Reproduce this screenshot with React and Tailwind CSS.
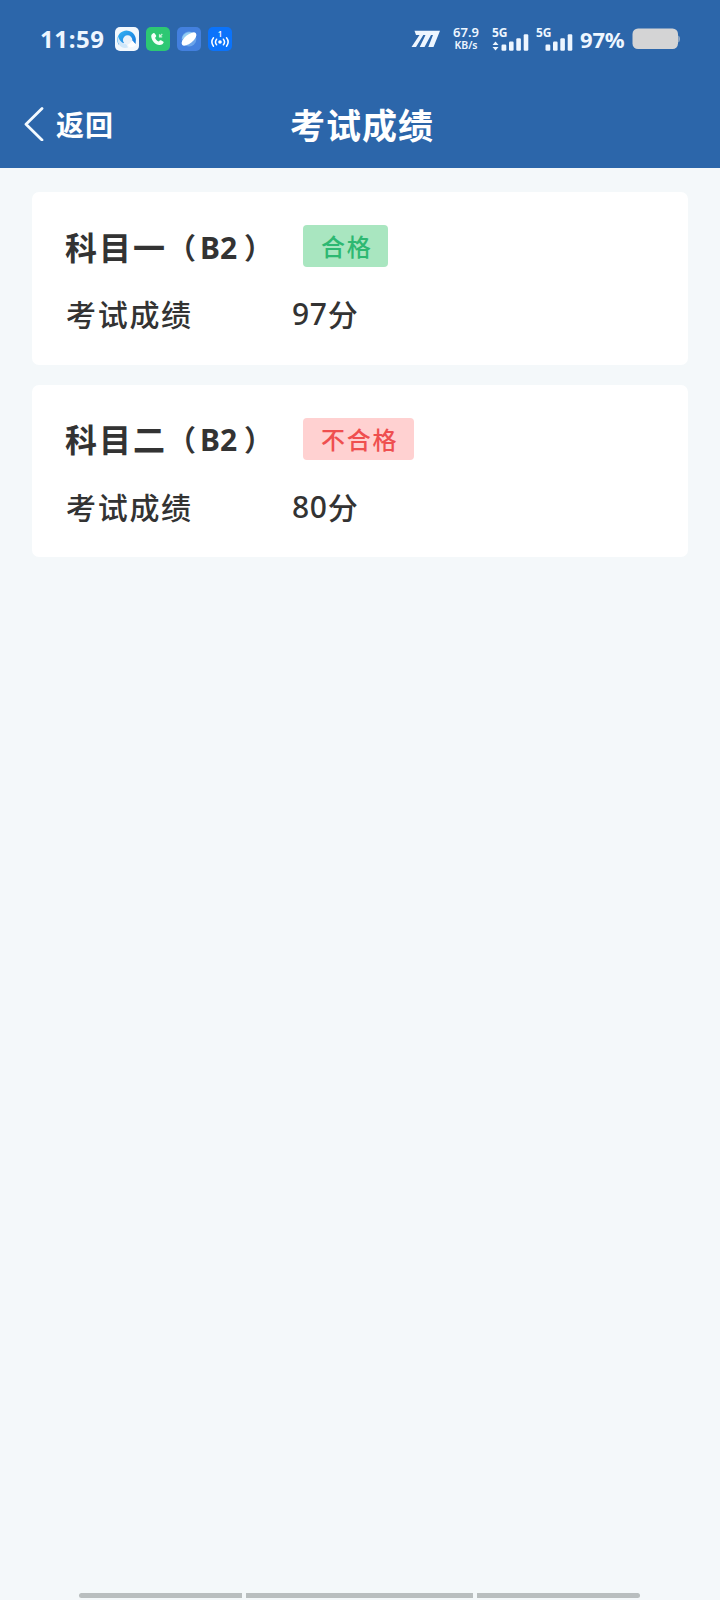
const FONT = "font-['Noto_Sans','Noto_Sans_CJK_SC',sans-serif]";

function AppIcons() {
  return (
    <div className="ml-[9px] flex gap-[7px]">
      <svg width="24" height="24" viewBox="0 0 24 24">
        <defs>
          <linearGradient id="ring" x1="0" y1="0" x2="1" y2="1">
            <stop offset="0" stopColor="#35b5f4" />
            <stop offset="1" stopColor="#1577dc" />
          </linearGradient>
        </defs>
        <rect width="24" height="24" rx="5" fill="#f3f8fd" />
        <path d="M3.500 17.500A9.300 9.300 0 1 1 20.800 14l-.2 3-3.800-2.600L8 16.200Z" fill="url(#ring)" />
        <path d="M3 9c1.500 5 4 7 8.500 8.200l1.500 3.300c-4 1.200-7.500-.2-9.200-3.200C2.400 14.800 2.300 12 3 9Z" fill="#cfe7fa" />
        <circle cx="12.600" cy="13" r="4.700" fill="#eaf2fa" />
        <path d="M13 17.500c2.500-1.500 3.500-3 4.500-4l3.500 4.200c-1.500 2-4.500 3-7 2.300Z" fill="#fff" />
      </svg>
      <svg width="24" height="24" viewBox="0 0 24 24">
        <rect width="24" height="24" rx="5" fill="#2dc873" />
        <path d="M7.200 6.200c-1.500.7-2.200 2-1.900 3.800.7 4.300 4 7.600 8 8 1.900.2 3.400-.6 4.200-2.200.3-.6.1-1-.4-1.300l-2.100-1.200c-.5-.3-1-.2-1.300.2l-.8 1c-2-.7-3.300-2-3.800-3.800l.7-.8c.4-.4.5-.8.3-1.300L8.800 6.600c-.3-.6-.9-.7-1.600-.4Z" fill="#f4fff8" />
        <path d="M16.300 7 13.500 9.700m0-2.500v2.700h2.700" fill="none" stroke="#c9f3d9" strokeWidth="1.200" />
      </svg>
      <svg width="24" height="24" viewBox="0 0 24 24">
        <rect width="24" height="24" rx="5" fill="#4380de" />
        <circle cx="12" cy="12" r="7.400" fill="#6aa3ea" />
        <path d="M5 12A7.400 7.400 0 0 1 18.500 8.500Z" fill="#93cdf3" />
        <ellipse cx="12" cy="12" rx="9" ry="4.200" transform="rotate(-40 12 12)" fill="#fff" />
      </svg>
      <svg width="24" height="24" viewBox="0 0 24 24">
        <rect width="24" height="24" rx="5" fill="#0b73fb" />
        <text x="12" y="9.500" textAnchor="middle" fontFamily="Noto Sans" fontWeight="600" fontSize="8" fill="#fff">1</text>
        <circle cx="12" cy="15" r="1.800" fill="#fff" />
        <path d="M8.600 12.200a4.400 4.400 0 0 0 0 5.600M15.400 12.200a4.400 4.400 0 0 1 0 5.600M5.500 10.800a6.800 6.800 0 0 0 0 8.400M18.500 10.800a6.800 6.800 0 0 1 0 8.400" fill="none" stroke="#fff" strokeWidth="1.500" strokeLinecap="round" />
      </svg>
    </div>
  );
}

function Signal({ arrows }) {
  return (
    <div className="flex w-[37px] flex-col">
      <span className="h-[12px] text-[12px] leading-[12px] font-bold">5G</span>
      <svg className="-mt-[6px]" width="37" height="18" viewBox="0 0 37 18">
        {arrows && <path d="M.5 12 3.500 8.500 6.500 12ZM.5 14 3.500 17.500 6.500 14Z" fill="#eef6ff" />}
        <g fill="#eef6ff">
          <rect x="9.500" y="11.500" width="4.800" height="6.300" rx="1.200" />
          <rect x="17" y="8.500" width="4.600" height="9.300" rx="1.200" />
          <rect x="24.300" y="5.300" width="4.600" height="12.500" rx="1.200" />
          <rect x="31.700" y="1.300" width="4.600" height="16.500" rx="1.200" />
        </g>
      </svg>
    </div>
  );
}

function StatusBar() {
  return (
    <div className="flex h-[77px] items-center pl-[40px] text-[#eef6ff]">
      <span className="w-[66px] text-[24px] leading-[24px] font-bold tracking-[0.600px]">11:59</span>
      <AppIcons />
      <svg className="ml-[179px]" width="30" height="18" viewBox="0 0 30 18">
        <path d="M3.500.8H29L22.500 17H17.300L22 5H20L13.500 17H8.700L14.500 5H12.300L5 17H.5L8.500 5H5Z" fill="#eef6ff" />
      </svg>
      <div className="ml-[10px] flex w-[30px] flex-col items-center font-semibold">
        <span className="text-[13px] leading-[14px]">67.9</span>
        <span className="text-[10.500px] leading-[13px] whitespace-nowrap">KB/s</span>
      </div>
      <div className="ml-[11px] flex gap-[7px]">
        <Signal arrows />
        <Signal />
      </div>
      <span className="ml-[7px] w-[47px] text-[22px] leading-[24px] font-bold tracking-[-0.200px]">97%</span>
      <svg className="ml-[5px]" width="49" height="22" viewBox="0 0 49 22">
        <rect x=".5" y=".5" width="45.500" height="20.500" rx="5.500" fill="#d4d4d5" />
        <path d="M46.500 7.500c1.500.6 1.500 6.200 0 7Z" fill="#d4d4d5" />
      </svg>
    </div>
  );
}

function Header() {
  return (
    <header className="h-[168px] bg-[#2c66aa]">
      <StatusBar />
      <div className="grid h-[91px] grid-cols-[1fr_auto_1fr] items-center pt-[4px] text-white">
        <div className="flex items-center pl-[24px]">
          <svg className="-mt-[2px]" width="20" height="34" viewBox="0 0 20 34">
            <path d="M18 1.500 2 17.200 18 33" fill="none" stroke="#f3faff" strokeWidth="2.800" strokeLinecap="round" strokeLinejoin="round" />
          </svg>
          <span className="ml-[12px] text-[28px] leading-[36px] font-bold tracking-[1px]">返回</span>
        </div>
        <h1 className="ml-[4px] pt-[2px] text-[35px] leading-[44px] font-bold tracking-[1px]">考试成绩</h1>
        <div />
      </div>
    </header>
  );
}

function ScoreCard({ subject, score, status, badge }) {
  return (
    <section className="h-[172.500px] rounded-[7px] bg-white px-[32px] pt-[33px] text-[#333]">
      <div className="flex h-[42px] items-center">
        <h2 className="flex w-[239px] items-center pt-[3px] text-[32px] leading-[42px] font-bold whitespace-nowrap">
          <span className="w-[104px] pl-[1px] tracking-[2px]">{subject}</span>
          <span className="flex w-[28px] justify-end text-[29px]">（</span>
          <span className="ml-[4px] w-[44px] text-[30px] font-bold">B2</span>
          <span className="w-[32px] text-[29px]">）</span>
        </h2>
        <span className={`flex h-[42px] items-center rounded-[4px] pt-[2px] pr-[16px] pl-[18px] text-[24px] leading-[36px] font-medium tracking-[1.700px] ${badge}`}>
          {status}
        </span>
      </div>
      <div className="mt-[27px] flex h-[42px] items-center text-[30px] leading-[42px] font-medium">
        <span className="w-[228px] pl-[2px] tracking-[1.700px]">考试成绩</span>
        <span className="flex">
          <span className="-mt-px font-medium tracking-[0.700px]">{score}</span>
          <span>分</span>
        </span>
      </div>
    </section>
  );
}

export default function App() {
  return (
    <div className={`flex h-[1600px] w-[720px] flex-col overflow-hidden bg-[#f4f8fa] ${FONT}`}>
      <Header />
      <main className="flex flex-1 flex-col gap-[20px] px-[32px] pt-[24px]">
        <ScoreCard subject="科目一" score="97" status="合格" badge="bg-[#a9e6c0] text-[#2eb872]" />
        <ScoreCard subject="科目二" score="80" status="不合格" badge="bg-[#ffd1d1] text-[#ef4f4f]" />
      </main>
      <footer className="flex gap-[4px] pr-[80px] pb-[2px] pl-[79px]">
        <div className="h-[5px] w-[163px] rounded-l-full bg-[#b9bebf]" />
        <div className="h-[5px] flex-1 bg-[#b9bebf]" />
        <div className="h-[5px] w-[163px] rounded-r-full bg-[#b9bebf]" />
      </footer>
    </div>
  );
}
